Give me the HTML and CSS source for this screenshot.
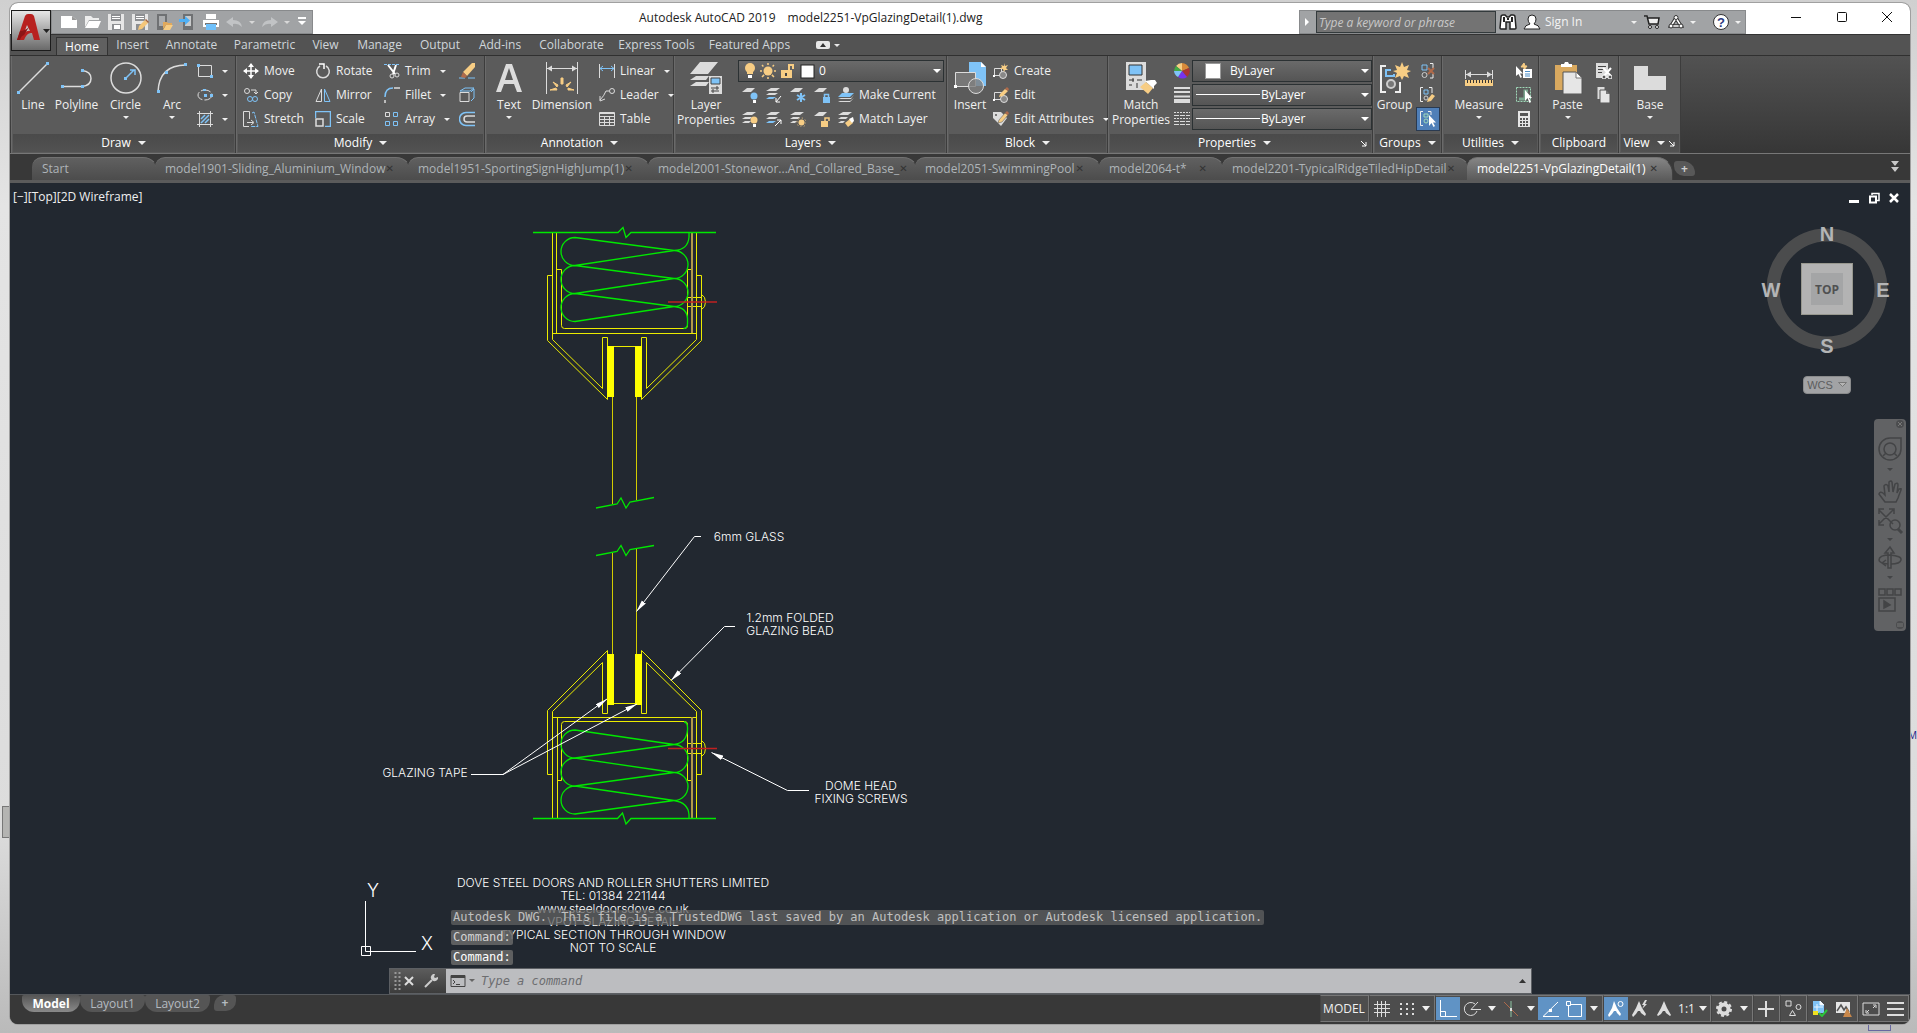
FILE: index.html
```html
<!DOCTYPE html>
<html lang="en">
<head>
<meta charset="utf-8">
<title>Autodesk AutoCAD 2019</title>
<link rel="stylesheet" href="styles.css">
</head>
<body>
<div class="desktop-scroll"></div>
<div class="desktop-box"></div>
<span class="desktop-letter">M</span>
<div class="window">

<header class="titlebar">
  <button class="app-button" aria-label="Application menu">
    <svg width="39" height="40" viewBox="0 0 39 40"><path d="M5 29 13 5Q14 3 16 3h3q2 0 3 2l6 24h-6l-2-7q-5-1-8 7Z" fill="#b8211f"/><path d="M15 14l-3 8q4-3 6-2Z" fill="#c9c9c9"/><path d="M5 29l3-9q5 0 9-4l-5 8q-3 1-4 5Z" fill="#8c1616"/><path d="M31 18h7l-3.500 4z" fill="#222"/></svg>
  </button>
  <div class="qat">
    <button aria-label="New"><svg width="18" height="16"><path d="M1 2h11l5 4v8H1z" fill="#fff"/><path d="M12 2v4h5z" fill="#999"/></svg></button>
    <button aria-label="Open"><svg width="18" height="16"><path d="M1 13V2h6l2 2h6v2H5z" fill="#eee"/><path d="M5 7h12l-3 7H1z" fill="#fff"/></svg></button>
    <button aria-label="Save"><svg width="18" height="16"><path d="M1 0h16v16H1z" fill="#e6e6e6"/><path d="M4 0h10v7H4zM5 10h9v6H5z" fill="#8d8f92"/><path d="M5 2h8v1H5zM5 4h8v1H5zM7 11h6v4H7z" fill="#fff"/></svg></button>
    <button aria-label="Save as"><svg width="18" height="16"><path d="M1 0h16v16H1z" fill="#e6e6e6"/><path d="M4 0h10v7H4zM5 10h9v6H5z" fill="#8d8f92"/><path d="M5 2h8v1H5zM5 4h8v1H5z" fill="#fff"/><path d="M8 12l6-6 3 3-6 6-4 1z" fill="#f4c67a"/><path d="M14 6l1-1 3 3-1 1z" fill="#a4623c"/></svg></button>
    <button aria-label="Open from mobile"><svg width="18" height="16"><path d="M2 0h10v16H2z" fill="#6f7173"/><path d="M4 2h6v10H4z" fill="#aaacae"/><path d="M8 15V8h4l1 1h4v2h-6z" fill="#e0a95c"/><path d="M11 11h7l-3 5H8z" fill="#f7cd84"/></svg></button>
    <button aria-label="Save to mobile"><svg width="18" height="16"><path d="M5 0h10v16H5z" fill="#6f7173"/><path d="M7 2h6v10H7z" fill="#c8cacb"/><path d="M1 5h6V2l5 4.500L7 11V8H1z" fill="#4fb0f5"/></svg></button>
    <button aria-label="Plot"><svg width="18" height="16"><path d="M4 0h10v5H4zM1 6h16v7H1z" fill="#fff"/><path d="M3 9h12v2H3z" fill="#777"/><path d="M4 10h10v6H4z" fill="#6fc0fa"/></svg></button>
    <button aria-label="Undo"><svg width="18" height="16"><path d="M1 8l7-5v3q8 0 9 7-4-4-9-3v3z" fill="#c1c3c5"/></svg></button>
    <i class="caret light"></i>
    <button aria-label="Redo"><svg width="18" height="16"><path d="M17 8l-7-5v3q-8 0-9 7 4-4 9-3v3z" fill="#c1c3c5"/></svg></button>
    <i class="caret light"></i>
    <button aria-label="Customize"><svg width="12" height="16"><path d="M2 3h8v2H2zM2 7h8l-4 4z" fill="#fff"/></svg></button>
  </div>
  <h1 class="title"><span>Autodesk AutoCAD 2019</span><span>model2251-VpGlazingDetail(1).dwg</span></h1>
  <div class="infocenter">
    <button class="ic-toggle" aria-label="Collapse search"><svg width="6" height="8"><path d="M1 0v8l4-4z" fill="#fff"/></svg></button>
    <input class="search" type="text" aria-label="Search" placeholder="Type a keyword or phrase">
    <button aria-label="Find"><svg width="18" height="16"><path d="M2 3q0-2 2-2h2l2 2h2l2-2h2q2 0 2 2l1 11q0 1-1 1h-5V8H7v7H2q-1 0-1-1z" fill="#fff" stroke="#222" stroke-width="1.500"/><path d="M5 3v5M13 3v5M8 5h2" stroke="#222" stroke-width="2"/></svg></button>
    <button class="signin"><svg width="18" height="16"><path d="M9 1q4 0 4 4 0 3-2 5 5 1 6 5H1q1-4 6-5-2-2-2-5 0-4 4-4z" fill="#fff" stroke="#222"/></svg><span>Sign In</span><i class="caret light"></i></button>
    <button aria-label="App Store"><svg width="18" height="16"><path d="M1 2h3l2 8h9l1-6H5" fill="#eee" stroke="#222" stroke-width="1.500"/><circle cx="7" cy="13" r="1.500" fill="#fff" stroke="#222"/><circle cx="14" cy="13" r="1.500" fill="#fff" stroke="#222"/></svg></button>
    <button class="stay" aria-label="Stay connected"><svg width="18" height="16"><path d="M9 4L4 12h10z" fill="none" stroke="#333" stroke-width="3.500"/><path d="M9 4L4 12h10z" fill="none" stroke="#fff" stroke-width="1.500"/><circle cx="9" cy="3.500" r="2" fill="#fff" stroke="#333"/><circle cx="4" cy="12" r="2" fill="#fff" stroke="#333"/><circle cx="14" cy="12" r="2" fill="#fff" stroke="#333"/></svg><i class="caret light"></i></button>
    <button class="stay" aria-label="Help"><svg width="18" height="18"><circle cx="9" cy="9" r="7.500" fill="#fff" stroke="#333"/><text x="9" y="14" text-anchor="middle" class="help-mark">?</text></svg><i class="caret light"></i></button>
  </div>
  <div class="win-controls">
    <button aria-label="Minimize"><svg width="12" height="12"><path d="M1 6.500h10" stroke="#111"/></svg></button>
    <button aria-label="Maximize"><svg width="12" height="12"><rect x="1.500" y="1.500" width="9" height="9" rx="1" fill="none" stroke="#111"/></svg></button>
    <button aria-label="Close"><svg width="12" height="12"><path d="M1 1l10 10M11 1L1 11" stroke="#111"/></svg></button>
  </div>
</header>

<nav class="menu">
  <button class="active">Home</button><button>Insert</button><button>Annotate</button><button>Parametric</button><button>View</button><button>Manage</button><button>Output</button><button>Add-ins</button><button>Collaborate</button><button>Express Tools</button><button>Featured Apps</button>
  <button class="menu-min" aria-label="Minimize ribbon"><svg width="24" height="8"><rect width="14" height="8" rx="2" fill="#e8e8e8"/><path d="M4 6h6l-3-4z" fill="#333"/><path d="M18 3h6l-3 3z" fill="#e8e8e8"/></svg></button>
</nav>

<div class="ribbon">
  <section class="panel">
    <div class="tools draw">
      <button class="big"><svg width="32" height="32"><path d="M2 30L30 2" stroke="#dcdcdc" stroke-width="1.500"/><path d="M0 29h3v3H0zM29 0h3v3h-3z" fill="#7fc3f7"/></svg><span>Line</span></button>
      <button class="big"><svg width="32" height="32"><path d="M1 24.500h20M21 8.500q9 1 9 8t-9 8" fill="none" stroke="#dcdcdc" stroke-width="1.500"/><path d="M0 23h3v3H0zM20 23h3v3h-3zM20 7h3v3h-3z" fill="#7fc3f7"/></svg><span>Polyline</span></button>
      <button class="big"><svg width="32" height="32"><circle cx="16" cy="16" r="15" fill="none" stroke="#dcdcdc" stroke-width="1.500"/><path d="M16 16l8-8M20 8h5v5" fill="none" stroke="#7fc3f7" stroke-width="1.500"/><path d="M14 15h3v3h-3z" fill="#7fc3f7"/></svg><span>Circle</span><i class="caret"></i></button>
      <button class="big"><svg width="32" height="32"><path d="M2 30Q3 3 30 3" fill="none" stroke="#dcdcdc" stroke-width="1.500"/><path d="M1 28h3v3H1zM9 9h3v3H9zM28 1h3v3h-3z" fill="#7fc3f7"/></svg><span>Arc</span><i class="caret"></i></button>
      <div class="col">
        <button class="small" aria-label="Rectangle"><svg width="16" height="16"><path d="M1.500 2.500h13v11h-13z" fill="none" stroke="#dcdcdc"/><path d="M0 1h3v3H0zM13 12h3v3h-3z" fill="#7fc3f7"/></svg><i class="caret"></i></button>
        <button class="small" aria-label="Ellipse"><svg width="16" height="16"><ellipse cx="8" cy="8" rx="7" ry="5" fill="none" stroke="#dcdcdc" stroke-dasharray="10 2"/><path d="M7 7h3v3H7zM6 2h3v2H6zM13 7h3v3h-3z" fill="#7fc3f7"/></svg><i class="caret"></i></button>
        <button class="small" aria-label="Hatch"><svg width="16" height="16"><path d="M2.500 0v16M13.500 0v16M0 2.500h16M0 13.500h16" stroke="#dcdcdc"/><path d="M4 8l4-4M4 12l8-8M8 12l4-4" stroke="#7fc3f7" stroke-width="1.500"/></svg><i class="caret"></i></button>
      </div>
    </div>
    <h2 class="panel-title">Draw<i class="caret"></i></h2>
  </section>

  <section class="panel">
    <div class="tools modify">
      <div class="col">
        <button class="small"><svg width="16" height="16"><path d="M8 1v14M1 8h14" stroke="#fff" stroke-width="1.500"/><path d="M8 0l3 4H5zM8 16l3-4H5zM0 8l4-3v6zM16 8l-4-3v6z" fill="#fff"/></svg><span>Move</span></button>
        <button class="small"><svg width="16" height="16"><circle cx="4" cy="4" r="2.500" fill="none" stroke="#dcdcdc"/><path d="M8 3h5v3M11 5l2 2 2-2" fill="none" stroke="#dcdcdc"/><circle cx="7" cy="12" r="2.500" fill="none" stroke="#7fc3f7"/><circle cx="12" cy="12" r="2.500" fill="none" stroke="#7fc3f7"/></svg><span>Copy</span></button>
        <button class="small"><svg width="16" height="16"><path d="M6 15.500H.500V.500h6V8M4 11.500h6M8 9l3 2.500L8 14" fill="none" stroke="#dcdcdc"/><path d="M9 2l2-1 4 14.500H8" fill="none" stroke="#7fc3f7" stroke-dasharray="4 1"/></svg><span>Stretch</span></button>
      </div>
      <div class="col">
        <button class="small"><svg width="16" height="16"><path d="M11 3a6.300 6.300 0 1 1-6 0" fill="none" stroke="#dcdcdc" stroke-width="1.500"/><path d="M4 1h5v5" fill="none" stroke="#fff" stroke-width="1.500"/></svg><span>Rotate</span></button>
        <button class="small"><svg width="16" height="16"><path d="M6.500 2v12.500H1z" fill="none" stroke="#dcdcdc"/><path d="M9.500 2v12.500H15z" fill="none" stroke="#7fc3f7"/></svg><span>Mirror</span></button>
        <button class="small"><svg width="16" height="16"><path d="M.500 7V.500h15v15H10" fill="none" stroke="#7fc3f7" stroke-width="1.500"/><path d="M1 8h7v7H1z" fill="none" stroke="#dcdcdc" stroke-width="1.500"/></svg><span>Scale</span></button>
      </div>
      <div class="col">
        <button class="small"><svg width="16" height="16"><path d="M0 1.500h16" stroke="#7fc3f7" stroke-dasharray="3 1"/><path d="M4 2l7 9M12 2L9 11" stroke="#fff" stroke-width="2"/><circle cx="8" cy="13" r="2" fill="none" stroke="#dcdcdc"/><circle cx="13" cy="12" r="2" fill="none" stroke="#dcdcdc"/></svg><span>Trim</span><i class="caret"></i></button>
        <button class="small"><svg width="16" height="16"><path d="M1 16v-3M10 1h6" stroke="#dcdcdc" stroke-width="1.500"/><path d="M1 10Q1 1 9 1" fill="none" stroke="#7fc3f7" stroke-width="1.500"/></svg><span>Fillet</span><i class="caret"></i></button>
        <button class="small"><svg width="16" height="16" fill="none"><path d="M1.500 1.500h4v4h-4z" stroke="#dcdcdc"/><path d="M9.500 1.500h4v4h-4zM1.500 10.500h4v4h-4zM9.500 10.500h4v4h-4z" stroke="#7fc3f7"/></svg><span>Array</span><i class="caret"></i></button>
      </div>
      <div class="col">
        <button class="small" aria-label="Erase"><svg width="16" height="16"><path d="M0 15h6M9 15h7" stroke="#7fc3f7"/><path d="M4 9L13 0h3v4L8 13z" fill="#f7cd84"/><path d="M4 9l4 4-2 2-4-1z" fill="#b06a4a"/></svg></button>
        <button class="small" aria-label="Explode"><svg width="16" height="16" fill="none"><path d="M1 5.500h9v9H1z" stroke="#dcdcdc"/><path d="M1 4l5-3h9l-4 3zM12 5l3-3v9l-3 3" stroke="#7fc3f7"/></svg></button>
        <button class="small" aria-label="Offset"><svg width="16" height="16" fill="none"><path d="M16 1.500H7a6.500 6.500 0 0 0 0 13h9" stroke="#7fc3f7" stroke-width="1.500"/><path d="M16 5H8a3 3 0 0 0 0 6h8" stroke="#dcdcdc" stroke-width="1.500"/></svg></button>
      </div>
    </div>
    <h2 class="panel-title">Modify<i class="caret"></i></h2>
  </section>

  <section class="panel">
    <div class="tools annot">
      <button class="big"><svg width="32" height="32"><path d="M3 30L13 2h6l10 28h-5l-3-8H11l-3 8zM12 18h8L16 6z" fill="#dcdcdc"/></svg><span>Text</span><i class="caret"></i></button>
      <button class="big"><svg width="32" height="32"><path d="M.500 0v32M31.500 0v32M1 6.500h30" stroke="#dcdcdc"/><path d="M1 6.500l5-3v6zM31 6.500l-5-3v6z" fill="#dcdcdc"/><path d="M4 28l6-2 1 2zM7 20l5 3-1 2zM15 16l2 0 0 6-2 0zM25 20l-4 5-1-2zM28 28l-6 0 0-2z" fill="#f7cd84" stroke="#f7cd84"/></svg><span>Dimension</span></button>
      <div class="col">
        <button class="small"><svg width="16" height="16"><path d="M.500 1v14M15.500 1v14" stroke="#dcdcdc"/><path d="M1 5.500h14M4 3L1 5.500 4 8M12 3l3 2.500L12 8" stroke="#7fc3f7" fill="none"/></svg><span>Linear</span><i class="caret"></i></button>
        <button class="small"><svg width="16" height="16" fill="none" stroke="#dcdcdc"><circle cx="13" cy="4" r="2.500"/><path d="M10 4H7q-2 5-6 9M1 9v5l5-2"/></svg><span>Leader</span><i class="caret"></i></button>
        <button class="small"><svg width="16" height="16" fill="none" stroke="#dcdcdc"><path d="M.500 1.500h15v13H.500zM1 2.500h14M1 5.500h14M1 8.500h14M1 11.500h14M5.500 5v9M10.500 5v9"/></svg><span>Table</span></button>
      </div>
    </div>
    <h2 class="panel-title">Annotation<i class="caret"></i></h2>
  </section>

  <section class="panel">
    <div class="tools layers">
      <button class="big"><svg width="32" height="32" fill="#dcdcdc"><path d="M10 0h18L18 12H0zM6 14h13l-3 4H0zM6 20h13l-3 4H0z"/><path d="M19 14h13v18H19z"/><path d="M21 16h9v6h-9z" fill="#7fc3f7" stroke="#444"/><path d="M21 26h8M21 29h8M27 24v4M23 27v4" stroke="#444"/></svg><span>Layer<br>Properties</span></button>
      <div class="col">
        <div class="field">
          <svg class="field-icon" width="72" height="18"><circle cx="6" cy="6" r="5" fill="#f7cd84"/><path d="M3 9h6v3H3z" fill="#f7cd84"/><path d="M4 13h4v3H4z" fill="#fff"/><circle cx="24" cy="9" r="4.500" fill="#f7cd84"/><path d="M24 1v16M16 9h16M18 3l12 12M30 3L18 15" stroke="#f7cd84" stroke-width="1.500" stroke-dasharray="2 12 3"/><path d="M37 8h11v8H37z" fill="#f7cd84"/><path d="M45 8V3h4v4" fill="none" stroke="#f7cd84" stroke-width="2"/><path d="M41 11h2v3h-2z" fill="#444"/><rect x="57" y="3" width="13" height="13" fill="#fff" stroke="#222"/></svg>
          <select class="pick layer-pick" aria-label="Layer"><option>0</option></select>
        </div>
        <div class="row">
          <button aria-label="Off"><svg width="16" height="16"><path d="M5 1h8L9 5H0z" fill="#dcdcdc"/><circle cx="12" cy="9" r="3.500" fill="#7fc3f7"/><path d="M11 13h3v3h-3z" fill="#fff"/></svg></button>
          <button aria-label="Isolate"><svg width="16" height="16"><path d="M5 1h9l-4 3H0zM3 6h9l-3 2H0z" fill="#dcdcdc"/><path d="M3 10h7l-3 2H0z" fill="#7fc3f7"/><path d="M15 9l-5 6M10 11v4h4" stroke="#fff" fill="none"/></svg></button>
          <button aria-label="Freeze"><svg width="16" height="16"><path d="M5 1h8L9 5H0z" fill="#dcdcdc"/><path d="M11 6v9M7 8l8 5M15 8l-8 5" stroke="#7fc3f7" stroke-width="2"/></svg></button>
          <button aria-label="Lock"><svg width="16" height="16"><path d="M5 1h8L9 5H0z" fill="#dcdcdc"/><path d="M9 10h7v6H9z" fill="#7fc3f7"/><path d="M10.500 10V7.500h4V10" fill="none" stroke="#7fc3f7" stroke-width="1.500"/></svg></button>
          <button class="small"><svg width="16" height="16"><circle cx="8" cy="3" r="3" fill="#dcdcdc"/><path d="M4 6h12l-4 4H0z" fill="#7fc3f7"/><path d="M3 11h10l3-3-3 4H0zM0 15h12l4-4-4 3H2z" fill="#dcdcdc"/></svg><span>Make Current</span></button>
        </div>
        <div class="row">
          <button aria-label="Turn on"><svg width="16" height="16"><path d="M5 1h9l-4 3H0zM3 6h7l-2 2H0zM3 10h6l-2 2H0z" fill="#dcdcdc"/><circle cx="12" cy="9" r="3.500" fill="#f7cd84"/><path d="M11 13h3v3h-3z" fill="#fff"/></svg></button>
          <button aria-label="Unisolate"><svg width="16" height="16"><path d="M5 1h9l-4 3H0zM3 6h9l-3 2H0z" fill="#dcdcdc"/><path d="M3 10h7l-3 2H0z" fill="#7fc3f7"/><path d="M9 15l6-6M11 9h4v4" stroke="#fff" fill="none"/></svg></button>
          <button aria-label="Thaw"><svg width="16" height="16"><path d="M5 1h9l-4 3H0zM3 6h7l-2 2H0zM3 10h4l-2 2H0z" fill="#dcdcdc"/><circle cx="11.500" cy="11.500" r="3" fill="#f7cd84"/><circle cx="11.500" cy="11.500" r="4.500" fill="none" stroke="#f7cd84" stroke-dasharray="1 2.500"/></svg></button>
          <button aria-label="Unlock"><svg width="16" height="16"><path d="M5 1h8L9 5H0z" fill="#dcdcdc"/><path d="M7 10h7v6H7z" fill="#f7cd84"/><path d="M11 10V7h4v3" stroke="#f7cd84" fill="none" stroke-width="1.500"/></svg></button>
          <button class="small"><svg width="16" height="16"><path d="M5 1h9l-4 3H0zM3 6h7l-2 2H0zM3 10h4l-2 2H0z" fill="#dcdcdc"/><path d="M7 12l5-4 3 4-5 4z" fill="#f7cd84"/><path d="M11 8l4-2 1 4-2 2z" fill="#fff"/></svg><span>Match Layer</span></button>
        </div>
      </div>
    </div>
    <h2 class="panel-title">Layers<i class="caret"></i></h2>
  </section>

  <section class="panel">
    <div class="tools block">
      <button class="big"><svg width="32" height="32"><path d="M15 0h12l5 5v19H15z" fill="#7fc3f7"/><path d="M27 0v5h5z" fill="#fff"/><path d="M1.500 10.500h20v14h-20z" fill="#777" stroke="#dcdcdc"/><circle cx="22" cy="24" r="7.500" fill="#808080" fill-opacity=".8" stroke="#dcdcdc"/><path d="M0 23h3v3H0z" fill="#fff"/></svg><span>Insert</span></button>
      <div class="col">
        <button class="small"><svg width="16" height="16"><path d="M1.500 5.500h7v7h-7z" fill="none" stroke="#dcdcdc"/><circle cx="10" cy="12" r="3.500" fill="#888" stroke="#dcdcdc"/><path d="M0 12h2v2H0z" fill="#fff"/><path d="M11 0l1 3 3-1-2 3 2 2-3 0-1 2-1-3-3 0 2-2-1-2 3 1z" fill="#f7cd84"/></svg><span>Create</span></button>
        <button class="small"><svg width="16" height="16"><path d="M1.500 5.500h7v7h-7z" fill="none" stroke="#dcdcdc"/><circle cx="11" cy="12" r="3.500" fill="#888" stroke="#dcdcdc"/><path d="M0 12h2v2H0z" fill="#fff"/><path d="M7 7l5-5 3 2-5 5-4 1z" fill="#f7cd84"/><path d="M12 2l2-2 2 2-1 2z" fill="#b06a4a"/></svg><span>Edit</span></button>
        <button class="small"><svg width="16" height="16"><path d="M0 1h8l6 6-6 8-8-8z" fill="#dcdcdc"/><circle cx="3" cy="4" r="1" fill="#555"/><path d="M6 9l6-7 3 2-6 7-4 1z" fill="#f7cd84" stroke="#555" stroke-width=".5"/><path d="M12 2l2-2 2 2-1 2z" fill="#b06a4a"/></svg><span>Edit Attributes</span><i class="caret"></i></button>
      </div>
    </div>
    <h2 class="panel-title">Block<i class="caret"></i></h2>
  </section>

  <section class="panel">
    <div class="tools props">
      <button class="big"><svg width="32" height="32"><path d="M1 0h20v28H1z" fill="#dcdcdc"/><path d="M4 3h13v10H4z" fill="#7fc3f7" stroke="#333"/><path d="M4 18h5M4 23h3M8 16v4M12 21v5M12 18h5" stroke="#333"/><path d="M15 25l6-5 7 6-5 6z" fill="#f7cd84"/><path d="M20 19l6-1 4 0 2 3-3 3 0 3z" fill="#fff"/></svg><span>Match<br>Properties</span></button>
      <div class="col">
        <div class="row"><svg class="prop-icon" width="16" height="16"><path d="M8 8L2 3a8 8 0 0 1 6-3z" fill="#f7cd84"/><path d="M8 8V0a8 8 0 0 1 7 5z" fill="#d98a3a"/><path d="M8 8l7-3a8 8 0 0 1-2 9z" fill="#a33"/><path d="M8 8l5 6a8 8 0 0 1-9 0z" fill="#73e"/><path d="M8 8l-4 6a8 8 0 0 1-4-6z" fill="#7fc3f7"/><path d="M8 8H0a8 8 0 0 1 2-5z" fill="#4a4"/></svg>
          <div class="field"><span class="swatch"></span><select class="pick color-pick" aria-label="Color"><option>ByLayer</option></select></div></div>
        <div class="row"><svg class="prop-icon" width="16" height="16"><path d="M0 1h16M0 5h16M0 9.500h16M0 14h16" stroke="#dcdcdc" stroke-width="2"/><path d="M0 14h16" stroke="#dcdcdc" stroke-width="4"/></svg>
          <div class="field"><span class="stroke-sample"></span><select class="pick line-pick" aria-label="Lineweight"><option>ByLayer</option></select></div></div>
        <div class="row"><svg class="prop-icon" width="16" height="16"><path d="M0 1.500h16M0 7.500h16" stroke="#dcdcdc" stroke-dasharray="2 1"/><path d="M0 4.500h16M0 10.500h16M0 13.500h16" stroke="#dcdcdc" stroke-dasharray="5 1"/></svg>
          <div class="field"><span class="stroke-sample"></span><select class="pick line-pick" aria-label="Linetype"><option>ByLayer</option></select></div></div>
      </div>
    </div>
    <h2 class="panel-title with-launch">Properties<i class="caret"></i><svg class="launch" width="7" height="7"><path d="M1 1l5 5M6 2v4H2" stroke="#fff" fill="none"/></svg></h2>
  </section>

  <section class="panel">
    <div class="tools groups">
      <button class="big"><svg width="32" height="32" fill="none"><path d="M7 4H2v26h5M16 30h5V20" stroke="#eee" stroke-width="2"/><path d="M12 8H7v6h8v-2" stroke="#7fc3f7" stroke-width="2"/><circle cx="12" cy="22" r="4" fill="#777" stroke="#ccc" stroke-width="2"/><path d="M23 0l2 5 5-2-2 5 4 1-4 2 2 5-5-2-2 4-2-4-5 2 2-5-4-2 4-1-2-5 5 2z" fill="#f7cd84"/></svg><span>Group</span></button>
      <div class="col">
        <button class="small" aria-label="Ungroup"><svg width="16" height="16" fill="none"><path d="M2 2h5v5H2z" stroke="#7fc3f7"/><circle cx="4.500" cy="12" r="2.500" stroke="#ccc"/><path d="M10 .500h3V5M13 11v4h-3" stroke="#eee"/><path d="M8 5l6 6M14 5l-6 6" stroke="#b06a4a" stroke-width="2"/></svg></button>
        <button class="small" aria-label="Group edit"><svg width="16" height="16" fill="none"><path d="M3 .500H.500v14H3M9 .500h3V6" stroke="#eee"/><path d="M4 3h4v4H4z" stroke="#7fc3f7"/><circle cx="6" cy="11" r="2" stroke="#ccc"/><path d="M8 12l4-5 3 2-4 5-4 1z" fill="#f7cd84"/></svg></button>
        <button class="small on" aria-label="Group selection"><svg width="16" height="16" fill="none"><path d="M3 .500H.500v14H3M8 .500h3V4" stroke="#eee"/><path d="M4 3h4v3H4z" stroke="#9fd8b8"/><circle cx="6" cy="10" r="2" stroke="#9fd8b8"/><path d="M9 4v11l2.500-3 2 4 1.500-1-2-3.500h3z" fill="#fff"/></svg></button>
      </div>
    </div>
    <h2 class="panel-title">Groups<i class="caret"></i></h2>
  </section>

  <section class="panel">
    <div class="tools utils">
      <button class="big"><svg width="32" height="32"><path d="M2.500 8v9M29.500 8v9M3 12.500h26" stroke="#dcdcdc"/><path d="M3 12.500l5-3v6zM29 12.500l-5-3v6z" fill="#dcdcdc"/><path d="M2 18h28v6H2z" fill="#f7cd84"/><path d="M4 19.500h26" stroke="#333" stroke-width="3" stroke-dasharray="1 2"/></svg><span>Measure</span><i class="caret"></i></button>
      <div class="col">
        <button class="small" aria-label="Quick select"><svg width="16" height="16"><path d="M0 3v10l2.500-2 2 4 1.500-1-2-3.500h3z" fill="#fff"/><path d="M8 0L5 4h3l0 3 3-4H9z" fill="#f7cd84" stroke="#f7cd84"/><path d="M7 6h9v9H7z" fill="#fff"/><path d="M9 8.500h5M9 11h5M9 13h5" stroke="#4b8ec9"/></svg></button>
        <button class="small" aria-label="Select all"><svg width="16" height="16" fill="none"><path d="M.500.500h14v14H.500z" stroke="#9fd8b8" stroke-dasharray="2 1"/><path d="M3 12h6V4h3" stroke="#7aa58e" stroke-width="3"/><path d="M9 3v11l2.500-3 2 5 1.500-1-2-4h3z" fill="#fff"/></svg></button>
        <button class="small" aria-label="Calculator"><svg width="16" height="16"><path d="M2 0h12v16H2z" fill="#e6e6e6"/><path d="M4 2h8v3H4z" fill="#555"/><path d="M4 8h8M4 11h8M4 14h8" stroke="#555" stroke-width="2" stroke-dasharray="2 1"/></svg></button>
      </div>
    </div>
    <h2 class="panel-title">Utilities<i class="caret"></i></h2>
  </section>

  <section class="panel">
    <div class="tools clip">
      <button class="big"><svg width="32" height="32"><path d="M3 3h22v25H3z" fill="#d9a95f"/><path d="M9 2h3l1-2h3l1 2h3v3H9z" fill="#fff"/><path d="M11 10h13l6 6v16H11z" fill="#e6e6e6" stroke="#555"/><path d="M24 10v6h6z" fill="#fff" stroke="#777"/></svg><span>Paste</span><i class="caret"></i></button>
      <div class="col">
        <button class="small" aria-label="Cut"><svg width="16" height="16"><path d="M0 0h12v15H0z" fill="#dcdcdc"/><path d="M2 3.500h8M2 6.500h6M2 9.500h4" stroke="#444"/><path d="M7 5l8 8M15 5l-7 8" stroke="#fff" stroke-width="2"/><circle cx="8" cy="14" r="2" fill="#555" stroke="#fff"/><circle cx="14" cy="14" r="2" fill="#555" stroke="#fff"/></svg></button>
        <button class="small" aria-label="Copy clip"><svg width="16" height="16"><path d="M1.500 0h7v12h-7z" fill="#dcdcdc"/><path d="M4 3h6l4 4v9H4z" fill="#e6e6e6" stroke="#555"/><path d="M10 3v4h4z" fill="#777"/></svg></button>
      </div>
    </div>
    <h2 class="panel-title">Clipboard</h2>
  </section>

  <section class="panel">
    <div class="tools view">
      <button class="big"><svg width="32" height="32"><path d="M0 4h14v10h18v14H0z" fill="#dcdcdc"/></svg><span>Base</span><i class="caret"></i></button>
    </div>
    <h2 class="panel-title with-launch">View<i class="caret"></i><svg class="launch" width="7" height="7"><path d="M1 1l5 5M6 2v4H2" stroke="#fff" fill="none"/></svg></h2>
  </section>
</div>

<nav class="doc-tabs">
  <button class="doc"><span>Start</span></button>
  <button class="doc"><span>model1901-Sliding_Aluminium_Window</span><b>✕</b></button>
  <button class="doc"><span>model1951-SportingSignHighJump(1)</span><b>✕</b></button>
  <button class="doc"><span>model2001-Stonewor...And_Collared_Base_</span><b>✕</b></button>
  <button class="doc"><span>model2051-SwimmingPool</span><b>✕</b></button>
  <button class="doc"><span>model2064-t*</span><b>✕</b></button>
  <button class="doc"><span>model2201-TypicalRidgeTiledHipDetail</span><b>✕</b></button>
  <button class="doc active"><span>model2251-VpGlazingDetail(1)</span><b>✕</b></button>
  <button class="add" aria-label="New drawing">+</button>
  <button class="more" aria-label="More drawings"><svg width="8" height="12"><path d="M0 0h8L4 5zM0 6h8l-4 5z" fill="#c8c8c8"/></svg></button>
</nav>

<main class="canvas">
  <svg class="drawing" aria-label="Glazing detail drawing">
    <defs>
      <marker id="arrow" markerUnits="userSpaceOnUse" markerWidth="13" markerHeight="6" refX="12" refY="2.500" orient="auto-start-reverse"><path d="M0 0L12 2.500 0 5z" fill="#fff"/></marker>
    </defs>
    <g transform="translate(-10 -183)" fill="none">
      <g class="ink-yellow">
        <path d="M552.500 233v106.500l50 49v-51h5v62l-60-59v-65h5M556.500 233v100M552 333.500h145"/>
        <path d="M696.500 233v106.500l-50 49v-51h-5v62l60-59v-65h-5"/>
        <path d="M556.500 269.500h5v56q0 3 3 3h120q3 0 3-3v-56h5M607 346.500h35"/>
        <path d="M687.500 297.500h14M687.500 306.500h14M701.500 294.500q4 2 4 7.500t-4 7.500"/>
        <path d="M552.500 818.500v-107l50-49v51h5v-63l-60 60v64h5M557.500 818v-100M552 717.500h145"/>
        <path d="M696.500 818.500v-107l-50-49v51h-5v-63l60 60v64h-5"/>
        <path d="M557.500 780.500h4v-56q0-3 3-3h120q3 0 3 3v56h5M607 703.500h35"/>
        <path d="M687.500 743.500h14M687.500 753.500h14M701.500 740.500q4 2 4 8t-4 8"/>
        <path class="dim" d="M612.500 346v158M636.500 346v154M612.500 553v151M636.500 549v155"/>
        <path class="warm" d="M692 233v100M692 717v101"/>
      </g>
      <path fill="#ffff00" d="M607 346h7v51h-7zM635 346h7v51h-7zM607 654h7v51h-7zM635 654h7v51h-7z"/>
      <g class="ink-green">
        <path d="M533 232.500h85l5-5 3 10 5-5h85M596 508l21-4 4-6 5 10 4-6 24-4.500M596 555.500l21-4 4-6 5 10 4-6 24-4M533 818.500h84.500l5-5.500 3.500 11 5-5.500h85"/>
        <path d="M674 250.500l-99-13a14 14 0 0 0 0 28zM674 278.500l-99-13a14 14 0 0 0 0 28zM674 306.500l-99-13a14 14 0 0 0 0 28z"/>
        <path d="M689 233v4q-1 13-15 13.500a14 14 0 0 1 0 28a14 14 0 0 1 0 28q13 1 13.500 12v5q0 5-4 5"/>
        <path d="M674 744.500l-99-14.500a14 14 0 0 0 0 28zM674 772.500l-99-14.500a14 14 0 0 0 0 28zM674 800.500l-99-14.500a14 14 0 0 0 0 28z"/>
        <path d="M684 722q4 0 3.500 8-1 13-13.500 14.500a14 14 0 0 1 0 28a14 14 0 0 1 0 28q14 2 15 14v4"/>
      </g>
      <path stroke="#c02020" stroke-width="1.500" d="M668 302h49M668 748.500h49"/>
      <g stroke="#fff" stroke-width="1">
        <path marker-start="url(#arrow)" d="M636.500 611.500l58-75h6.500"/>
        <path marker-start="url(#arrow)" d="M671 680.500l53.500-54H735"/>
        <path marker-start="url(#arrow)" d="M711.500 752.500l76 38H809"/>
        <path marker-end="url(#arrow)" d="M471 774.500h32l104-75.500"/>
        <path marker-end="url(#arrow)" d="M503 774.500L637 704"/>
        <path d="M365.500 901v50.500H416M361.500 946.500h9v9h-9z"/>
      </g>
      <g class="cad-text">
        <text x="749" y="541">6mm GLASS</text>
        <text x="790" y="622">1.2mm FOLDED</text>
        <text x="790" y="635">GLAZING BEAD</text>
        <text x="861" y="790">DOME HEAD</text>
        <text x="861" y="803">FIXING SCREWS</text>
        <text x="425" y="777">GLAZING TAPE</text>
        <text x="613" y="887">DOVE STEEL DOORS AND ROLLER SHUTTERS LIMITED</text>
        <text x="613" y="900">TEL: 01384 221144</text>
        <text x="613" y="913">www.steeldoorsdove.co.uk</text>
        <text x="613" y="926">VPOT GLAZING DETAIL</text>
        <text x="613" y="939">TYPICAL SECTION THROUGH WINDOW</text>
        <text x="613" y="952">NOT TO SCALE</text>
        <text class="axis" x="373" y="897">Y</text>
        <text class="axis" x="427" y="950">X</text>
      </g>
    </g>
  </svg>

  <div class="view-label">[−][Top][2D Wireframe]</div>
  <div class="view-controls">
    <button aria-label="Minimize view"><svg width="12" height="12"><path d="M1 8h10v3H1z" fill="#fff"/></svg></button>
    <button aria-label="Restore view"><svg width="12" height="12" fill="none" stroke="#fff" stroke-width="1.500"><path d="M4 3V1.500h7v7H9"/><path d="M2 4.500h6v6H2z" stroke-width="2"/></svg></button>
    <button aria-label="Close view"><svg width="12" height="12"><path d="M2 2l8 8M10 2l-8 8" stroke="#fff" stroke-width="2.500"/></svg></button>
  </div>

  <aside class="nav-tools">
    <svg class="viewcube" width="132" height="140" viewBox="1761 219 132 140"><circle cx="1827" cy="289" r="54" fill="none" stroke="#4b4c4d" stroke-width="13"/><rect x="1801.500" y="263.500" width="51" height="51" fill="#b3b3b3" stroke="#98988f"/><rect x="1811" y="273" width="32" height="32" fill="#a4a5a6"/><g class="compass"><text x="1827" y="241">N</text><text x="1827" y="353">S</text><text x="1771" y="297">W</text><text x="1883" y="297">E</text></g><text class="cube-face" x="1827" y="294">TOP</text></svg>
    <button class="wcs">WCS<svg width="9" height="6"><path d="M.500.500h8l-4 4z" fill="#b5b5b5" stroke="#777"/></svg></button>
    <div class="navbar">
      <svg width="32" height="212" fill="none" stroke="#434446" stroke-width="1.500">
        <circle cx="26" cy="5" r="4" fill="#4b4c4e" stroke="none"/><path d="M24 3l4 4M28 3l-4 4" stroke="#777" stroke-width="1"/>
        <path d="M16 19h11v11a11 11 0 1 1-11-11z"/><circle cx="16" cy="30" r="6"/><path d="M12 34l-3 3M20 34l3 3"/>
        <path d="M13 49h6l-3 3zM13 119h6l-3 3zM13 157h6l-3 3z" fill="#434446" stroke="none"/>
        <path d="M11 83L5 75q1-3 4-1l2 2-1-9q2-3 4 0l1 6 0-10q2-2 3 0l1 10 2-8q3-2 3 1l-1 8 2-4q3-1 2 1-2 5-3 8l-2 4z"/>
        <path d="M5 91l14 14M19 91L5 105M5 95v-5h5M15 90h5v5M5 101v5h5"/><circle cx="21" cy="106" r="5"/><path d="M24 110l4 4" stroke-width="3"/>
        <path d="M14 149v-15h-3l5-6 4 6h-3v15z"/><path d="M14 145q-9-1-9-4 0-5 11-5 12 1 11 5-1 4-10 4M12 141l-4 3 4 3"/>
        <path d="M5 170h6v6H5zM13 170h6v6h-6zM21 170h6v6h-6zM5 179h16v13H5z"/><path d="M10 182v7l6-3z" fill="#434446"/>
        <circle cx="26" cy="206" r="4" fill="#4b4c4e" stroke="none"/><path d="M23 205h6M23 207h6" stroke="#777" stroke-width="1"/>
      </svg>
    </div>
  </aside>

  <section class="command">
    <p class="log old">Autodesk DWG.&nbsp; This file is a TrustedDWG last saved by an Autodesk application or Autodesk licensed application.</p>
    <p class="log">Command:</p>
    <p class="log new">Command:</p>
    <div class="command-line">
      <svg class="grip" width="8" height="18"><path d="M1.500 0v18M5.500 0v18" stroke="#999" stroke-width="2" stroke-dasharray="2 2"/></svg>
      <button aria-label="Close command line"><svg width="10" height="10"><path d="M1 1l8 8M9 1L1 9" stroke="#ddd" stroke-width="2"/></svg></button>
      <button aria-label="Customize command line"><svg width="14" height="14"><path d="M1 13l7-7" stroke="#ccc" stroke-width="2"/><path d="M9 0q-4 3-1 6t6-1V3l-3 1-1-1 1-3z" fill="#ccc"/></svg></button>
      <div class="command-entry">
        <svg width="26" height="12"><path d="M1 .500h14v11H1z" fill="none" stroke="#444"/><path d="M1 2h14" stroke="#444" stroke-width="2"/><path d="M3 5l2 2-2 2M6 9.500h4" stroke="#444" fill="none"/><path d="M19 4h6l-3 3z" fill="#666"/></svg>
        <input type="text" aria-label="Command" placeholder="Type a command">
        <button aria-label="Command history"><svg width="8" height="5"><path d="M0 4h7L3.500 0z" fill="#333"/></svg></button>
      </div>
    </div>
  </section>
</main>

<footer class="statusbar">
  <nav class="layouts">
    <button class="active">Model</button><button>Layout1</button><button>Layout2</button><button class="add" aria-label="New layout">+</button>
  </nav>
  <div class="status">
    <div class="group"><button class="word">MODEL</button></div>
    <div class="group">
      <button aria-label="Grid"><svg width="16" height="16"><path d="M3.500 0v16M7.500 0v16M11.500 0v16M0 3.500h16M0 7.500h16M0 11.500h16" stroke="#ddd"/></svg></button>
      <button aria-label="Snap"><svg width="16" height="16"><path d="M2 3h14M2 8h14M2 13h14" stroke="#ddd" stroke-width="2" stroke-dasharray="2 4"/></svg></button>
      <button class="drop" aria-label="Snap options"><i class="caret"></i></button>
    </div>
    <div class="group">
      <button class="on" aria-label="Ortho"><svg width="18" height="18"><path d="M1.500 0v16.500H18M1.500 11.500h5v5" stroke="#fff" fill="none"/></svg></button>
      <button aria-label="Polar"><svg width="18" height="18" fill="none" stroke="#ddd"><path d="M12 4a6.500 6.500 0 1 0 2 7M8 9.500h10M8 9.500l7-7.500"/></svg></button>
      <button class="drop" aria-label="Polar options"><i class="caret"></i></button>
      <button aria-label="Isodraft"><svg width="16" height="16"><path d="M8 0v16" stroke="#8fc7a4"/><path d="M1 1l14 14" stroke="#b06a4a"/><path d="M7 7h2v3H7z" fill="#ddd"/></svg></button>
      <button class="drop" aria-label="Isodraft options"><i class="caret"></i></button>
      <button class="on" aria-label="Object snap tracking"><svg width="18" height="18"><path d="M17 2L2 16.500h16" stroke="#fff" fill="none"/><path d="M8 9h3v3H8z" fill="#fff"/></svg></button>
      <button class="on" aria-label="Object snap"><svg width="18" height="18" fill="none" stroke="#fff"><path d="M1.500 1.500h4v4h-4zM6 4.500h10.500v12H3.500V6"/></svg></button>
      <button class="drop" aria-label="Object snap options"><i class="caret"></i></button>
    </div>
    <div class="group">
      <button class="on" aria-label="Annotation visibility"><svg width="18" height="18"><path d="M7 1l3 7 4 6-1 2-3-3-1-2H7l-2 3-3 3-1-2 4-7z" fill="#fff"/><circle cx="13.500" cy="4" r="2.500" fill="none" stroke="#fff"/></svg></button>
      <button aria-label="Auto scale"><svg width="18" height="18"><path d="M8 1l3 7 4 6-1 2-4-3-1-2H7l-2 3-3 3-1-2 4-7zM14 0l-3 5h2l-2 4 5-5h-2l2-4z" fill="#ddd"/></svg></button>
      <button aria-label="Annotation scale"><svg width="18" height="18"><path d="M9 1l3 7 4 7-1 1-4-3-1-2H8l-2 3-3 2-1-1 4-7z" fill="#ddd"/></svg></button>
      <button class="scale">1:1<i class="caret"></i></button>
    </div>
    <div class="group">
      <button aria-label="Workspace"><svg width="16" height="16"><circle cx="8" cy="8" r="4.500" fill="none" stroke="#ddd" stroke-width="4"/><circle cx="8" cy="8" r="7" fill="none" stroke="#ddd" stroke-width="2" stroke-dasharray="3 2.500"/></svg></button>
      <button class="drop" aria-label="Workspace options"><i class="caret"></i></button>
    </div>
    <div class="group"><button aria-label="Annotation monitor"><svg width="16" height="16"><path d="M8 0v16M0 8h16" stroke="#ddd" stroke-width="2"/></svg></button></div>
    <div class="group"><button aria-label="Isolate objects"><svg width="17" height="17" fill="none" stroke="#ddd"><path d="M1 1h5v5H1zM7.500 10.500l3 5h-6z"/><circle cx="13.500" cy="7" r="2.500"/></svg></button></div>
    <div class="group">
      <button aria-label="Trusted DWG"><svg width="16" height="16"><path d="M1 0h7l4 4v8H1z" fill="#7fc3f7"/><path d="M8 0v4h4zM2 6h9M5 3v9" stroke="#e8f4ff" fill="#fff"/><path d="M1 10h5v4H1z" fill="#f0e020"/><path d="M7 12l3 3 5-6" stroke="#2bc43a" stroke-width="2" fill="none"/></svg></button>
      <button aria-label="Performance"><svg width="16" height="16"><path d="M0 1h14v11H0z" fill="#e6e6e6"/><path d="M1 10l4-6 3 5 2-3 3 5" fill="none" stroke="#555" stroke-width="1.500"/><path d="M11 7l5 9H7z" fill="#c8874a"/></svg></button>
    </div>
    <div class="group">
      <button aria-label="Clean screen"><svg width="18" height="14" fill="none" stroke="#ddd"><path d="M1 1h16v12H1zM4 8v3h3M5 10l2-2M14 6V3h-3M13 4l-2 2"/></svg></button>
      <button aria-label="Customization"><svg width="17" height="16"><path d="M0 2h17M0 8h17M0 14h17" stroke="#ddd" stroke-width="2"/></svg></button>
    </div>
  </div>
</footer>
</div>
</body>
</html>
```
FILE: styles.css
```css
* { box-sizing: border-box; }

body {
  margin: 0;
  min-height: 100vh;
  padding: 3px 7px 9px 10px;
  display: flex;
  position: relative;
  overflow: hidden;
  background: linear-gradient(#d0d0d0, #e4e4e4 20%, #dcdcdc 80%, #bababa);
  font: 12px/16px "Open Sans", "Noto Sans", sans-serif;
  color: #f0f0f0;
}

button {
  margin: 0;
  padding: 0;
  border: 0;
  background: none;
  color: inherit;
  font: inherit;
  display: flex;
  align-items: center;
  justify-content: center;
}

svg { display: block; flex: none; }
h1, h2, p { margin: 0; font: inherit; }

.desktop-scroll {
  position: absolute;
  left: 2px;
  top: 806px;
  width: 10px;
  height: 32px;
  background: #b4b4b2;
  border: 1px solid #777;
}

.desktop-box {
  position: absolute;
  right: 26px;
  bottom: 2px;
  width: 23px;
  height: 12px;
  border: 1px solid #6868a0;
}

.desktop-letter {
  position: absolute;
  right: 0;
  top: 727px;
  font-size: 10px;
  color: #22228a;
}

.window {
  flex: 1;
  min-width: 0;
  display: flex;
  flex-direction: column;
  position: relative;
  border-radius: 8px;
  overflow: hidden;
  background: #383838;
  box-shadow: 0 0 0 1px #a0a0a0;
}

.caret {
  flex: none;
  width: 0;
  height: 0;
  border: 3px solid transparent;
  border-top-color: #f0f0f0;
  border-bottom: 0;
}

/* Title bar */
.titlebar {
  height: 32px;
  display: flex;
  justify-content: space-between;
  align-items: flex-start;
  background: #fff;
  border-bottom: 1px solid #333;
}

.app-button {
  position: absolute;
  left: 1px;
  top: 7px;
  z-index: 2;
  width: 40px;
  height: 41px;
  border: 1px solid #1c1c1c;
  background: linear-gradient(#e6e6e6, #9a9a9a 60%, #6a6a6a);
}

.qat {
  margin: 7px 0 0 41px;
  width: 262px;
  height: 24px;
  padding: 0 4px 0 8px;
  display: flex;
  align-items: center;
  justify-content: space-between;
  background: #a1a3a5;
  border: 1px solid #888a8c;
}

.qat .caret { border-top-color: #d8d8d8; }

.title {
  position: absolute;
  left: 629px;
  top: 7px;
  display: flex;
  gap: 12px;
  color: #222;
}

.infocenter {
  margin: 7px 0 0 auto;
  width: 447px;
  height: 24px;
  display: flex;
  align-items: center;
  gap: 6px;
  padding-right: 4px;
  background: #a1a3a5;
  border: 1px solid #888a8c;
  color: #f4f4f4;
}

.ic-toggle { width: 7px; margin-left: 3px; }

.search {
  width: 180px;
  height: 22px;
  margin-right: -3px;
  padding: 0 2px;
  border: 1px solid #333a3c;
  background: #737373;
  font: italic 12px/16px "Open Sans", sans-serif;
}

.search::placeholder { color: #c8c8c8; opacity: 1; }
.signin { width: 114px; gap: 4px; justify-content: flex-start; }
.signin .caret { margin-left: auto; }
.stay { gap: 5px; margin-right: 10px; }
.stay:last-child { margin: 0; }
.help-mark { font: bold 13px "Liberation Sans", sans-serif; fill: #2c3a80; }

.win-controls {
  width: 164px;
  padding: 8px 17px 0 44px;
  display: flex;
  justify-content: space-between;
}

/* Ribbon tabs */
.menu {
  height: 20px;
  padding-left: 46px;
  display: grid;
  grid-template-columns: 52px 49px 69px 77px 45px 63px 58px 62px 81px 89px 97px 60px;
  background: #535353;
  color: #d0d6da;
}

.menu .active {
  margin-top: 2px;
  border: 1px solid #333;
  border-bottom: 0;
  background: #606060;
  color: #fff;
  line-height: 14px;
}

/* Ribbon panels */
.ribbon {
  height: 99px;
  padding-left: 1px;
  display: grid;
  grid-template-columns: 225px 249px 189px 273px 161px 265px 69px 97px 80px 62px;
  background: linear-gradient(#525252, #363636);
  border-top: 1px solid #303030;
  border-bottom: 1px solid #777;
}

.panel {
  display: flex;
  flex-direction: column;
  background: #5b5b5b;
  border-right: 1px solid #3c3c3c;
  box-shadow: inset 1px 0 #6a6a6a;
}

.tools { flex: 1; display: flex; }

.panel-title {
  height: 18px;
  margin: 0 1px 1px 2px;
  display: flex;
  align-items: center;
  justify-content: center;
  gap: 7px;
  position: relative;
  background: linear-gradient(#4a4a4a, #525252);
  color: #fff;
}

.panel-title .caret { border-width: 4px 4px 0; }
.panel-title .launch { position: absolute; right: 4px; bottom: 5px; }
.with-launch { padding-right: 12px; }

.big {
  flex: none;
  padding-top: 6px;
  flex-direction: column;
  justify-content: flex-start;
  line-height: 15px;
}

.big span { margin-top: 3px; }
.big .caret { margin-top: 4px; }

.col {
  flex: 1;
  padding-top: 3px;
  display: grid;
  grid-template-rows: repeat(3, 24px);
  align-content: start;
}

.small { gap: 5px; justify-content: flex-start; white-space: nowrap; }
.small .caret { margin-left: 4px; }
.row { display: flex; align-items: center; }

.draw { display: grid; grid-template-columns: 44px 43px 55px 38px 44px; }
.draw .col { padding-left: 6px; }
.modify { padding-left: 7px; display: grid; grid-template-columns: 72px 69px 75px 20px; }
.annot { display: grid; grid-template-columns: 48px 58px 82px; }
.annot .col { padding-left: 8px; }

.layers .big { width: 64px; }
.layers .row { gap: 8px; padding-left: 4px; }
.block .big { width: 46px; }
.props .big { width: 66px; }
.props .row { gap: 2px; }
.groups .big { width: 43px; }
.groups .small { width: 24px; justify-content: center; }
.groups .on { background: #4f7fb8; border: 1px solid #2a3a50; }
.utils .big { width: 74px; }
.clip .big { width: 57px; }
.view .big { width: 62px; }

.field { position: relative; flex: 1; }

.pick {
  display: block;
  width: 100%;
  height: 22px;
  appearance: none;
  border: 1px solid #2b3133;
  border-radius: 0;
  background: linear-gradient(#6a6a6a, #555);
  color: #fff;
  font: inherit;
}

.field::after {
  content: "";
  position: absolute;
  right: 3px;
  top: 9px;
  border: 4px solid transparent;
  border-top-color: #fff;
  border-bottom: 0;
}

.layers .field { margin: 1px 2px 1px 0; }
.layer-pick { padding-left: 80px; }
.color-pick { padding-left: 37px; }
.line-pick { padding-left: 68px; }
.field-icon { position: absolute; left: 6px; top: 2px; }

.swatch {
  position: absolute;
  left: 13px;
  top: 3px;
  width: 16px;
  height: 16px;
  background: #fff;
  border: 1px solid #999;
}

.stroke-sample {
  position: absolute;
  left: 4px;
  top: 10px;
  width: 64px;
  height: 1px;
  background: #fff;
}

/* Document tabs */
.doc-tabs {
  height: 29px;
  padding: 3px 11px 0 22px;
  display: grid;
  grid-template-columns: 123px 253px 240px 267px 184px 123px 245px 206px 22px 1fr;
  background: #383838;
  border-bottom: 3px solid #5b5b5b;
  color: #aeb4b8;
}

.doc {
  margin-right: -4px;
  padding: 0 18px 0 10px;
  justify-content: space-between;
  white-space: nowrap;
  border-radius: 10px 16px 0 0;
  border-top: 1px solid #727272;
  border-right: 1px solid #404040;
  background: linear-gradient(#606060, #4c4c4c);
}

.doc b { font: 10px/16px "DejaVu Sans", sans-serif; color: #333; }

.doc.active {
  z-index: 1;
  margin-right: 0;
  padding-right: 14px;
  background: linear-gradient(#858585, #5b5b5b);
  color: #fff;
}

.doc-tabs .add {
  height: 15px;
  margin: 4px 0 0 1px;
  border-radius: 3px 12px 3px 10px;
  background: #585858;
  color: #ccc;
  font-weight: bold;
}

.more { justify-self: end; height: 20px; }

/* Drawing area */
.canvas {
  flex: 1;
  position: relative;
  overflow: hidden;
  background: #222830;
}

.drawing { position: absolute; width: 100%; height: 100%; }
.ink-yellow { stroke: #ecec00; }
.ink-yellow .dim { stroke: #d2cc00; }
.ink-yellow .warm { stroke: #b39a4a; stroke-width: 2; }
.ink-green { stroke: #00e800; stroke-width: 1.3; }
.cad-text { font: 300 12px "Inter", sans-serif; fill: #fff; text-anchor: middle; }
.cad-text .axis { font-size: 18px; }

.view-label { position: absolute; left: 3px; top: 6px; }
.view-controls { position: absolute; right: 10px; top: 9px; display: flex; gap: 8px; }

.nav-tools {
  position: absolute;
  right: 4px;
  top: 36px;
  width: 145px;
  display: flex;
  flex-direction: column;
}

.compass { font: bold 20px "Liberation Sans", sans-serif; fill: #b4b5b6; text-anchor: middle; }
.cube-face { font: bold 12px "Open Sans", sans-serif; fill: #505152; text-anchor: middle; }

.wcs {
  width: 48px;
  height: 18px;
  margin: 17px 0 0 42px;
  gap: 5px;
  border: 1px solid #8a8b8c;
  border-radius: 4px;
  background: #a2a3a5;
  color: #5c5d5e;
  font: 11px/14px "Liberation Sans", sans-serif;
}

.navbar {
  margin: 25px 0 0 auto;
  width: 32px;
  height: 212px;
  background: #616264;
  border-radius: 4px;
}

/* Command window */
.command {
  position: absolute;
  left: 379px;
  right: 378px;
  bottom: 0;
  display: flex;
  flex-direction: column;
  align-items: flex-start;
}

.log {
  margin: 0 0 5px 62px;
  padding: 0 2px;
  border-radius: 2px;
  background: rgba(105, 105, 105, .85);
  font: 12px/15px "DejaVu Sans Mono", monospace;
  white-space: nowrap;
  color: #d4d4d4;
}

.log.old { background: rgba(98, 98, 98, .75); color: #c0c0c0; }
.log.new { margin-bottom: 3px; color: #fff; }

.command-line {
  align-self: stretch;
  height: 26px;
  padding-left: 4px;
  display: flex;
  align-items: center;
  background: linear-gradient(#5c5c5c, #3c3c3c);
  border: 1px solid #5c5f63;
}

.command-line > button { width: 14px; margin-right: 8px; }

.command-entry {
  flex: 1;
  height: 24px;
  padding: 0 4px;
  display: flex;
  align-items: center;
  gap: 5px;
  background: #bcbdc0;
}

.command-entry input {
  flex: 1;
  border: 0;
  padding: 0;
  background: none;
  font: italic 12px/16px "DejaVu Sans Mono", monospace;
}

.command-entry input::placeholder { color: #6c6d70; opacity: 1; }

/* Status bar */
.statusbar {
  height: 30px;
  display: flex;
  justify-content: space-between;
  background: #383838;
  border-top: 1px solid #54575b;
}

.layouts { display: flex; height: 17px; padding-left: 12px; color: #b4bac0; }

.layouts button {
  width: 65px;
  border-radius: 2px 2px 12px 12px;
  background: #555;
}

.layouts .active {
  width: 58px;
  background: linear-gradient(#555, #8a8a8a);
  color: #fff;
  font-weight: bold;
}

.layouts .add {
  width: 22px;
  height: 16px;
  margin-left: 4px;
  border-radius: 10px 3px 10px 3px;
  font-weight: bold;
}

.status { display: flex; height: 27px; padding-right: 1px; }

.group {
  display: flex;
  padding: 1px 1px 1px 0;
  background: #4d4d4d;
  border: 1px solid #777;
  border-left-color: #444;
}

.group button { width: 24px; }
.group .word { width: 46px; }
.group .drop { width: 15px; }
.group .scale { width: 33px; gap: 4px; }
.group .on { background: #6093c5; }
.group .caret { border-width: 5px 4px 0; }
```
